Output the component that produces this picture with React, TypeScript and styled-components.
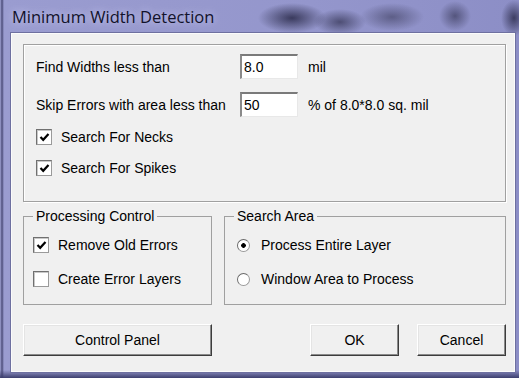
import { createGlobalStyle, styled } from 'styled-components'

const GlobalStyle = createGlobalStyle`
  html, body {
    margin: 0;
    padding: 0;
  }
  body {
    font-family: "Liberation Sans", Arial, sans-serif;
    background: #8f91c8;
  }
`

const Window = styled.div`
  width: 519px;
  height: 378px;
  box-sizing: border-box;
  display: flex;
  flex-direction: column;
  padding: 0 4px 6px 11px;
  background:
    radial-gradient(ellipse 34px 15px at 292px 18px, rgba(35, 35, 65, 0.8), transparent),
    radial-gradient(ellipse 26px 13px at 340px 22px, rgba(40, 40, 70, 0.65), transparent),
    radial-gradient(ellipse 32px 14px at 392px 17px, rgba(50, 50, 80, 0.55), transparent),
    radial-gradient(ellipse 16px 15px at 455px 16px, rgba(45, 45, 75, 0.6), transparent),
    radial-gradient(ellipse 13px 18px at 514px 18px, rgba(35, 35, 65, 0.75), transparent),
    linear-gradient(to bottom, transparent 370px, #3d3f6e 378px),
    linear-gradient(to right, #a3a5d6 0, #4c4d7a 2px, #9a9cd0 4px, #9496cc 60%, #8c8ec6 100%);
`

const TitleBar = styled.div`
  height: 33px;
  display: flex;
  align-items: center;
  padding-left: 1px;
  font-family: "Open Sans", "Noto Sans", sans-serif;
  font-size: 16.5px;
  color: #12122a;
  text-shadow: 0 0 8px rgba(220, 220, 255, 0.9);
`

const Client = styled.div`
  flex: 1;
  box-sizing: border-box;
  display: flex;
  flex-direction: column;
  padding: 10px 8px 0 11px;
  background: #f0f0f0;
  border: 1px solid #fbfbfb;
  box-shadow: 0 0 0 1px #6e70a0;
`

const TopGroup = styled.div`
  height: 158px;
  box-sizing: border-box;
  display: flex;
  flex-direction: column;
  gap: 9px;
  padding: 9px 12px 0;
  border: 1px solid #a0a0a0;
  box-shadow: inset 1px 1px 0 #fff, 1px 1px 0 #fff;
`

const Fields = styled.div`
  display: flex;
  flex-direction: column;
  gap: 13px;
`

const FieldRow = styled.div`
  display: grid;
  grid-template-columns: 204px 58px 1fr;
  align-items: center;
  height: 25px;
`

const Label = styled.span`
  font-size: 14px;
  color: #000;
  white-space: nowrap;
`

const Unit = styled(Label)`
  margin-left: 10px;
`

const TextBox = styled.div`
  width: 58px;
  height: 25px;
  box-sizing: border-box;
  display: flex;
  align-items: center;
  padding-left: 2px;
  background: #fff;
  border-style: solid;
  border-width: 2px 1px 1px 2px;
  border-color: #7a7a7a #e8e8e8 #e8e8e8 #8a8a8a;
  font-size: 14px;
  color: #000;
`

const Option = styled.label<{ $indent?: number }>`
  display: flex;
  align-items: center;
  gap: 9px;
  height: 22px;
  padding-left: ${({ $indent }) => $indent ?? 0}px;
  font-size: 14px;
  color: #000;
  white-space: nowrap;
`

const Box = styled.span`
  width: 16px;
  height: 16px;
  box-sizing: border-box;
  display: flex;
  align-items: center;
  justify-content: center;
  background: #fff;
  border: 1px solid #9a9a9a;
  border-top-color: #707070;
  border-left-color: #707070;
  box-shadow: inset 1px 1px 0 #c8c8c8;
`

const Radio = styled.span<{ $on?: boolean }>`
  width: 13px;
  height: 13px;
  box-sizing: border-box;
  border-radius: 50%;
  margin-right: 2px;
  border: 1px solid #9a9a9a;
  border-top-color: #6a6a6a;
  border-left-color: #6a6a6a;
  background: ${({ $on }) =>
    $on
      ? 'radial-gradient(circle, #000 0, #000 2px, #fff 2.6px)'
      : '#fff'};
`

const BottomRow = styled.div`
  display: flex;
  gap: 12px;
  margin-top: 6px;
`

const Group = styled.fieldset<{ $width: number }>`
  width: ${({ $width }) => $width}px;
  box-sizing: border-box;
  margin: 0;
  padding: 10px 9px 14px;
  border: 1px solid #a0a0a0;
  display: flex;
  flex-direction: column;
  gap: 12px;
`

const Legend = styled.legend`
  padding: 0 3px;
  font-size: 14px;
  line-height: 16px;
  color: #000;
`

const ButtonRow = styled.div`
  display: flex;
  justify-content: space-between;
  margin-top: 19px;
`

const ButtonPair = styled.div`
  display: flex;
  gap: 18px;
`

const Button = styled.button<{ $width: number }>`
  width: ${({ $width }) => $width}px;
  height: 32px;
  box-sizing: border-box;
  padding: 0;
  background: #f0f0f0;
  border: 1px solid;
  border-color: #ffffff #3c3c3c #3c3c3c #ffffff;
  box-shadow: inset -1px -1px 0 #8a8a8a, inset 1px 1px 0 #e4e4e4;
  font-family: "Liberation Sans", Arial, sans-serif;
  font-size: 14px;
  color: #000;
`

function Check({ on }: { on?: boolean }) {
  return (
    <Box>
      {on && (
        <svg width="11" height="11" viewBox="0 0 11 11">
          <polyline points="1.5,5 4.2,7.8 9.5,2" fill="none" stroke="#000" strokeWidth="2.2" />
        </svg>
      )}
    </Box>
  )
}

export default function App() {
  return (
    <>
      <GlobalStyle />
      <Window>
        <TitleBar>Minimum Width Detection</TitleBar>
        <Client>
          <TopGroup>
            <Fields>
              <FieldRow>
                <Label>Find Widths less than</Label>
                <TextBox>8.0</TextBox>
                <Unit>mil</Unit>
              </FieldRow>
              <FieldRow>
                <Label>Skip Errors with area less than</Label>
                <TextBox>50</TextBox>
                <Unit>% of 8.0*8.0 sq. mil</Unit>
              </FieldRow>
            </Fields>
            <Option>
              <Check on />
              Search For Necks
            </Option>
            <Option>
              <Check on />
              Search For Spikes
            </Option>
          </TopGroup>

          <BottomRow>
            <Group $width={189}>
              <Legend>Processing Control</Legend>
              <Option>
                <Check on />
                Remove Old Errors
              </Option>
              <Option>
                <Check />
                Create Error Layers
              </Option>
            </Group>
            <Group $width={282}>
              <Legend>Search Area</Legend>
              <Option $indent={3}>
                <Radio $on />
                Process Entire Layer
              </Option>
              <Option $indent={3}>
                <Radio />
                Window Area to Process
              </Option>
            </Group>
          </BottomRow>

          <ButtonRow>
            <Button $width={189}>Control Panel</Button>
            <ButtonPair>
              <Button $width={89}>OK</Button>
              <Button $width={89}>Cancel</Button>
            </ButtonPair>
          </ButtonRow>
        </Client>
      </Window>
    </>
  )
}
